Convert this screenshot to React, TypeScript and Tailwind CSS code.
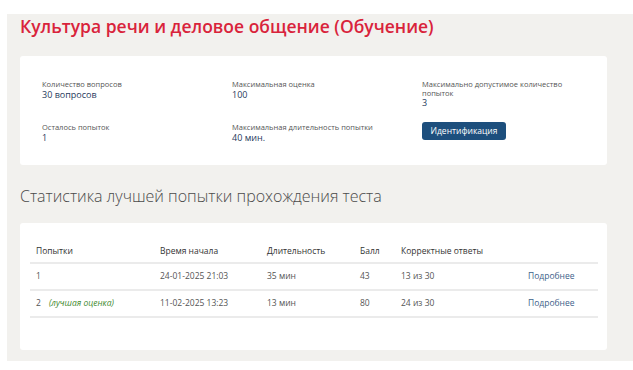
import React from "react";

const info = [
  { label: "Количество вопросов", value: "30 вопросов" },
  { label: "Максимальная оценка", value: "100" },
  { label: "Максимально допустимое количество попыток", value: "3" },
  { label: "Осталось попыток", value: "1" },
  { label: "Максимальная длительность попытки", value: "40 мин." },
];

const attempts = [
  { n: "1", best: false, start: "24-01-2025 21:03", dur: "35 мин", score: "43", correct: "13 из 30" },
  { n: "2", best: true, start: "11-02-2025 13:23", dur: "13 мин", score: "80", correct: "24 из 30" },
];

const Field: React.FC<{ label: string; value: string }> = ({ label, value }) => (
  <div className="flex flex-col">
    <span className="text-[7.5px] leading-[8.5px] text-[#555]">{label}</span>
    <span className="text-[9px] leading-[11px] text-[#1f3a5c]">{value}</span>
  </div>
);

const App: React.FC = () => {
  return (
    <div
      className="w-[633px] h-[370px] bg-white pt-[14px] pl-[7px]"
      style={{ fontFamily: '"Open Sans", "Noto Sans", sans-serif' }}
    >
      <div className="h-[347px] bg-[#f2f1ee] px-[13px] pt-[2px] pr-[26px]">
        <h1 className="text-[17.5px] leading-[20px] font-semibold text-[#d9233b]">
          Культура речи и деловое общение (Обучение)
        </h1>

        {/* info card */}
        <div className="mt-[20px] h-[109px] bg-white rounded-[3px] pt-[24px] pl-[22px]">
          <div className="grid grid-cols-[190px_190px_150px] gap-y-[15px]">
            <Field {...info[0]} />
            <Field {...info[1]} />
            <Field {...info[2]} />
            <Field {...info[3]} />
            <Field {...info[4]} />
            <div>
              <button className="block -mt-[1px] h-[18px] w-[84px] rounded-[3px] bg-[#1d4f7d] text-white text-[8.5px] font-medium">
                Идентификация
              </button>
            </div>
          </div>
        </div>

        <h2 className="mt-[20px] text-[16px] leading-[22px] font-light text-[#4a4a4a]">
          Статистика лучшей попытки прохождения теста
        </h2>

        {/* stats card */}
        <div className="mt-[16px] h-[127px] bg-white rounded-[3px] pt-[18px] pl-[10px] pr-[9px] text-[8.5px] text-[#555]">
          <div className="grid grid-cols-[124px_107px_93px_41px_127px_1fr] h-[23px] items-center pl-[6px] border-b-2 border-[#ebebeb] text-[#333]">
            <span>Попытки</span>
            <span>Время начала</span>
            <span>Длительность</span>
            <span>Балл</span>
            <span>Корректные ответы</span>
            <span></span>
          </div>
          {attempts.map((a) => (
            <div
              key={a.n}
              className="grid grid-cols-[124px_107px_93px_41px_127px_1fr] h-[27px] items-center pl-[6px] border-b-2 border-[#ebebeb]"
            >
              <span>
                {a.n}
                {a.best && (
                  <span className="ml-[8px] italic text-[#3f8a2f]">(лучшая оценка)</span>
                )}
              </span>
              <span>{a.start}</span>
              <span>{a.dur}</span>
              <span>{a.score}</span>
              <span>{a.correct}</span>
              <span className="text-[#3d5f8a]">Подробнее</span>
            </div>
          ))}
        </div>
      </div>
    </div>
  );
};

export default App;
